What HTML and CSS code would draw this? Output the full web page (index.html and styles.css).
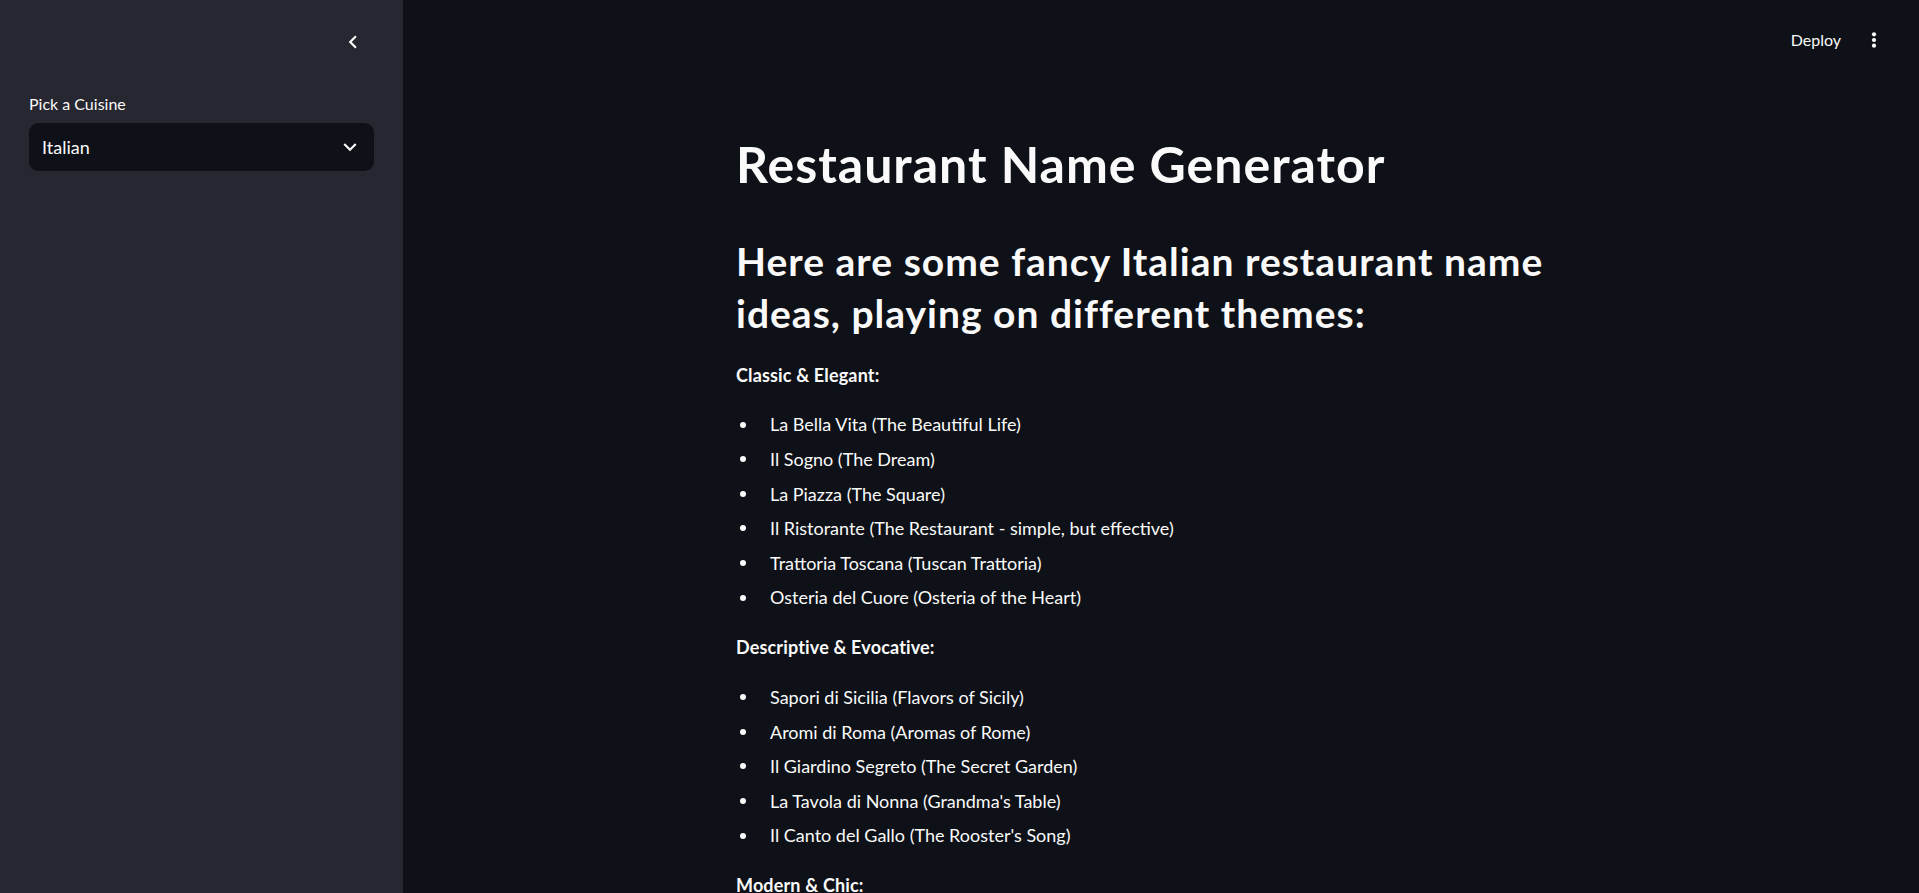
FILE: index.html
```html
<!DOCTYPE html>
<html lang="en">
<head>
<meta charset="utf-8">
<title>Restaurant Name Generator</title>
<link rel="stylesheet" href="styles.css">
</head>
<body>
<div class="app">
  <aside class="sidebar">
    <div class="sidebar-header">
      <button class="collapse-btn" aria-label="Collapse sidebar">
        <svg viewBox="0 0 24 24" width="26" height="26"><path d="M15.41 7.41L14 6l-6 6 6 6 1.41-1.41L10.83 12z" fill="#fafafa"/></svg>
      </button>
    </div>
    <div class="field">
      <label class="field-label">Pick a Cuisine</label>
      <div class="select">
        <span class="select-value">Italian</span>
        <svg class="select-icon" viewBox="0 0 24 24" width="26" height="26"><path d="M16.59 8.59L12 13.17 7.41 8.59 6 10l6 6 6-6z" fill="#fafafa"/></svg>
      </div>
    </div>
  </aside>
  <main class="main">
    <header class="toolbar">
      <span class="deploy">Deploy</span>
      <button class="menu-btn" aria-label="Main menu">
        <svg viewBox="0 0 24 24" width="24" height="24"><circle cx="12" cy="6.3" r="2.1" fill="#fafafa"/><circle cx="12" cy="12" r="2.1" fill="#fafafa"/><circle cx="12" cy="17.7" r="2.1" fill="#fafafa"/></svg>
      </button>
    </header>
    <section class="block">
      <h1 class="title">Restaurant Name Generator</h1>
      <div class="markdown">
        <h2 class="subtitle">Here are some fancy Italian restaurant name ideas, playing on different themes:</h2>
        <p><strong>Classic &amp; Elegant:</strong></p>
        <ul>
          <li>La Bella Vita (The Beautiful Life)</li>
          <li>Il Sogno (The Dream)</li>
          <li>La Piazza (The Square)</li>
          <li>Il Ristorante (The Restaurant - simple, but effective)</li>
          <li>Trattoria Toscana (Tuscan Trattoria)</li>
          <li>Osteria del Cuore (Osteria of the Heart)</li>
        </ul>
        <p><strong>Descriptive &amp; Evocative:</strong></p>
        <ul>
          <li>Sapori di Sicilia (Flavors of Sicily)</li>
          <li>Aromi di Roma (Aromas of Rome)</li>
          <li>Il Giardino Segreto (The Secret Garden)</li>
          <li>La Tavola di Nonna (Grandma's Table)</li>
          <li>Il Canto del Gallo (The Rooster's Song)</li>
        </ul>
        <p><strong>Modern &amp; Chic:</strong></p>
      </div>
    </section>
  </main>
</div>
</body>
</html>
```

FILE: styles.css
```css
* { box-sizing: border-box; }
html, body {
  margin: 0;
  height: 100%;
  overflow: hidden;
}
body {
  background: #0e1117;
  color: #fafafa;
  font-family: Lato, "Liberation Sans", sans-serif;
}
.app {
  display: flex;
  height: 100vh;
}
.sidebar {
  width: 403px;
  flex: 0 0 403px;
  background: #262730;
  padding: 0 29px;
}
.sidebar-header {
  height: 83px;
  display: flex;
  align-items: center;
  justify-content: flex-end;
  padding-right: 8px;
}
.collapse-btn, .menu-btn {
  background: none;
  border: 0;
  padding: 0;
  margin: 0;
  display: flex;
  cursor: pointer;
}
.field {
  margin-top: 10px;
}
.field-label {
  display: block;
  font-size: 16px;
  line-height: 22px;
  margin-bottom: 8px;
}
.select {
  height: 48px;
  background: #0e1117;
  border-radius: 9.6px;
  display: flex;
  align-items: center;
  justify-content: space-between;
  padding: 0 11px 0 13px;
}
.select-value {
  font-size: 18px;
}
.main {
  flex: 1;
  display: flex;
  flex-direction: column;
  min-width: 0;
}
.toolbar {
  height: 79px;
  flex: 0 0 79px;
  display: flex;
  align-items: center;
  justify-content: flex-end;
  padding-right: 33px;
  gap: 21px;
}
.deploy {
  font-size: 16px;
}
.block {
  width: 100%;
  max-width: 883px;
  margin: 0 auto;
  padding: 54.3px 16.5px 0;
}
.title {
  margin: 0 0 38.2px;
  font-size: 50px;
  line-height: 63.4px;
  font-weight: 700;
  letter-spacing: 1px;
}
.subtitle {
  margin: 0 0 19.7px;
  font-size: 39px;
  line-height: 52.5px;
  font-weight: 700;
  letter-spacing: 1px;
}
.markdown p {
  margin: 0 0 19.2px;
  font-size: 18px;
  line-height: 30.72px;
}
.markdown strong {
  font-weight: 700;
  letter-spacing: 0.15px;
}
.markdown ul {
  list-style: none;
  margin: 0 0 19.2px;
  padding: 0;
}
.markdown li {
  display: flex;
  align-items: center;
  font-size: 18px;
  line-height: 30.72px;
}
.markdown li + li {
  margin-top: 3.84px;
}
.markdown li::before {
  content: "";
  flex: 0 0 6px;
  width: 6px;
  height: 6px;
  border-radius: 50%;
  background: #fafafa;
  margin: 0 24px 0 4px;
}
```
